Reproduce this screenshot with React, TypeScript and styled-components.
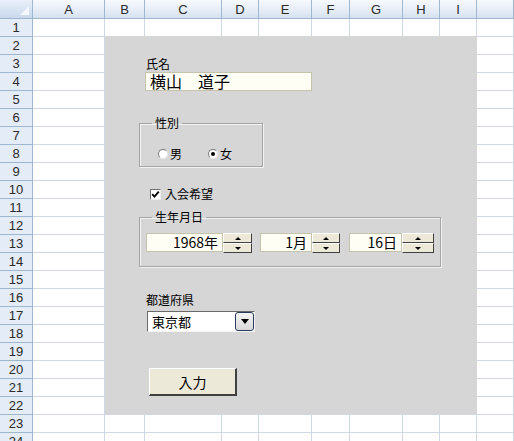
import { createGlobalStyle } from 'styled-components';
import styled from 'styled-components';

const GlobalStyle = createGlobalStyle`
  html, body {
    margin: 0;
    padding: 0;
    background: #ffffff;
    overflow: hidden;
  }
  body {
    font-family: "Liberation Sans", "Noto Sans CJK JP", sans-serif;
  }
`;

const columns = ['A', 'B', 'C', 'D', 'E', 'F', 'G', 'H', 'I', ''];
const widths = [72, 40, 77, 37, 53, 38, 53, 37, 37];
const rowCount = 24;

const Sheet = styled.div`
  position: relative;
  width: 514px;
  height: 441px;
  overflow: hidden;
`;

const Grid = styled.div`
  display: grid;
  grid-template-columns: 33px ${widths.map((w) => `${w}px`).join(' ')} 1fr;
  grid-template-rows: 19px;
  grid-auto-rows: 18px;
`;

const Corner = styled.div`
  position: relative;
  background: linear-gradient(to bottom, #e9f0f9, #c9d8ec);
  border-right: 1px solid #9eb6ce;
  border-bottom: 1px solid #9eb6ce;
  box-sizing: border-box;
  &::after {
    content: '';
    position: absolute;
    right: 3px;
    bottom: 3px;
    width: 0;
    height: 0;
    border-left: 9px solid transparent;
    border-bottom: 9px solid #f4f8fc;
  }
`;

const ColHead = styled.div`
  display: flex;
  align-items: center;
  justify-content: center;
  background: linear-gradient(to bottom, #f7f9fd 0%, #e6edf7 55%, #d6e1f0 100%);
  border-right: 1px solid #9eb6ce;
  border-bottom: 1px solid #9eb6ce;
  box-sizing: border-box;
  font-size: 13px;
  color: #2a2a2a;
`;

const RowHead = styled.div`
  display: flex;
  align-items: center;
  justify-content: center;
  background: #e4ecf7;
  border-right: 1px solid #9eb6ce;
  border-bottom: 1px solid #9eb6ce;
  box-sizing: border-box;
  font-size: 13px;
  color: #2a2a2a;
`;

const Cell = styled.div`
  border-right: 1px solid #d0d7e5;
  border-bottom: 1px solid #d0d7e5;
  box-sizing: border-box;
  background: #ffffff;
`;

const Form = styled.div`
  position: absolute;
  left: 105px;
  top: 36px;
  width: 372px;
  height: 378px;
  background: #d6d6d6;
  display: flex;
  flex-direction: column;
  align-items: flex-start;
  font-family: "Noto Sans CJK JP", "Liberation Sans", sans-serif;
  color: #000;
`;

const Placed = styled.div<{ $top: number; $left: number }>`
  margin-top: ${(p) => p.$top}px;
  margin-left: ${(p) => p.$left}px;
`;

const Label = styled.div`
  font-size: 12px;
  line-height: 12px;
`;

const TextBox = styled.div<{ $w: number; $size?: number; $right?: boolean }>`
  width: ${(p) => p.$w}px;
  height: 19px;
  box-sizing: border-box;
  background: #fffef4;
  border: 1px solid #c6c3ac;
  font-size: ${(p) => p.$size ?? 14}px;
  line-height: 17px;
  padding: 0 4px;
  display: flex;
  align-items: center;
  justify-content: ${(p) => (p.$right ? 'flex-end' : 'flex-start')};
  white-space: pre;
`;

const Frame = styled.fieldset<{ $w: number; $h: number }>`
  width: ${(p) => p.$w}px;
  height: ${(p) => p.$h}px;
  box-sizing: border-box;
  margin: 0;
  padding: 0 6px;
  border: 1px solid #a5a5a5;
  box-shadow: inset 1px 1px 0 #f2f2f2, 1px 1px 0 #f2f2f2;
  display: flex;
  align-items: flex-start;
  position: relative;
`;

const Legend = styled.legend`
  font-size: 12px;
  line-height: 14px;
  padding: 0 3px;
  margin-left: 6px;
`;

const RadioRow = styled.div`
  display: flex;
  align-items: center;
  gap: 26px;
  margin-left: 12px;
  margin-top: 17px;
`;

const Option = styled.div`
  display: flex;
  align-items: center;
  gap: 2px;
  font-size: 12px;
  line-height: 14px;
`;

const RadioDot = styled.span<{ $on?: boolean }>`
  width: 10px;
  height: 10px;
  border-radius: 50%;
  box-sizing: border-box;
  background: #fff;
  border: 1px solid #7a7a7a;
  border-right-color: #e8e8e8;
  border-bottom-color: #e8e8e8;
  display: flex;
  align-items: center;
  justify-content: center;
  &::after {
    content: '';
    width: 4px;
    height: 4px;
    border-radius: 50%;
    background: ${(p) => (p.$on ? '#000' : 'transparent')};
  }
`;

const CheckRow = styled.div`
  display: flex;
  align-items: center;
  gap: 4px;
  font-size: 12px;
  line-height: 14px;
`;

const CheckBox = styled.span`
  width: 11px;
  height: 11px;
  box-sizing: border-box;
  background: #fff;
  border: 1px solid #6f6f6f;
  border-right-color: #eeeeee;
  border-bottom-color: #eeeeee;
  display: flex;
  align-items: center;
  justify-content: center;
`;

const DateRow = styled.div`
  display: flex;
  align-items: center;
  margin-top: 9px;
`;

const DateField = styled.div<{ $gap: number }>`
  display: flex;
  align-items: flex-start;
  margin-left: ${(p) => p.$gap}px;
`;

const Spin = styled.div<{ $w: number }>`
  width: ${(p) => p.$w}px;
  height: 20px;
  display: flex;
  flex-direction: column;
`;

const SpinHalf = styled.div`
  flex: 1;
  box-sizing: border-box;
  background: #ece9d8;
  border-top: 1px solid #ffffff;
  border-left: 1px solid #ffffff;
  border-right: 1px solid #404040;
  border-bottom: 1px solid #404040;
  display: flex;
  align-items: center;
  justify-content: center;
`;

const Tri = styled.span<{ $up?: boolean }>`
  width: 0;
  height: 0;
  border-left: 3px solid transparent;
  border-right: 3px solid transparent;
  ${(p) => (p.$up ? 'border-bottom: 3px solid #000;' : 'border-top: 3px solid #000;')}
`;

const Combo = styled.div`
  width: 108px;
  height: 21px;
  box-sizing: border-box;
  background: #fff;
  border-top: 1px solid #6a6a6a;
  border-left: 1px solid #6a6a6a;
  border-right: 1px solid #f4f4f4;
  border-bottom: 1px solid #f4f4f4;
  display: flex;
  align-items: center;
  justify-content: space-between;
  padding-left: 4px;
  font-size: 13px;
`;

const DropBtn = styled.div`
  width: 19px;
  height: 19px;
  box-sizing: border-box;
  border: 1px solid #2b3d5c;
  border-radius: 3px;
  background: linear-gradient(to bottom, #f4f4f4, #d9d9d9);
  display: flex;
  align-items: center;
  justify-content: center;
`;

const DropTri = styled.span`
  width: 0;
  height: 0;
  border-left: 4px solid transparent;
  border-right: 4px solid transparent;
  border-top: 5px solid #000;
`;

const Button = styled.div`
  width: 88px;
  height: 28px;
  box-sizing: border-box;
  background: #ece9d8;
  border-top: 1px solid #ffffff;
  border-left: 1px solid #ffffff;
  border-right: 2px solid #404040;
  border-bottom: 2px solid #404040;
  display: flex;
  align-items: center;
  justify-content: center;
  font-size: 14px;
`;

function SpinButton({ w }: { w: number }) {
  return (
    <Spin $w={w}>
      <SpinHalf>
        <Tri $up />
      </SpinHalf>
      <SpinHalf>
        <Tri />
      </SpinHalf>
    </Spin>
  );
}

export default function App() {
  return (
    <>
      <GlobalStyle />
      <Sheet>
        <Grid>
          <Corner />
          {columns.map((c, i) => (
            <ColHead key={i}>{c}</ColHead>
          ))}
          {Array.from({ length: rowCount }, (_, r) => (
            <>
              <RowHead key={`h${r}`}>{r + 1}</RowHead>
              {columns.map((_, c) => (
                <Cell key={`c${r}-${c}`} />
              ))}
            </>
          ))}
        </Grid>
        <Form>
          <Placed $top={22} $left={41}>
            <Label>氏名</Label>
          </Placed>
          <Placed $top={2} $left={40}>
            <TextBox $w={167} $size={16}>横山　道子</TextBox>
          </Placed>
          <Placed $top={25} $left={34}>
            <Frame $w={124} $h={51}>
              <Legend>性別</Legend>
              <RadioRow>
                <Option>
                  <RadioDot />男
                </Option>
                <Option>
                  <RadioDot $on />女
                </Option>
              </RadioRow>
            </Frame>
          </Placed>
          <Placed $top={20} $left={45}>
            <CheckRow>
              <CheckBox>
                <svg width="9" height="9" viewBox="0 0 9 9">
                  <path d="M1.2 4.2 L3.4 6.6 L7.8 1.6" fill="none" stroke="#000" strokeWidth="1.8" />
                </svg>
              </CheckBox>
              入会希望
            </CheckRow>
          </Placed>
          <Placed $top={9} $left={34}>
            <Frame $w={299} $h={57}>
              <Legend>生年月日</Legend>
              <DateRow>
                <DateField $gap={0}>
                  <TextBox $w={77} $right>1968年</TextBox>
                  <SpinButton w={29} />
                </DateField>
                <DateField $gap={8}>
                  <TextBox $w={52} $right>1月</TextBox>
                  <SpinButton w={28} />
                </DateField>
                <DateField $gap={9}>
                  <TextBox $w={53} $right>16日</TextBox>
                  <SpinButton w={32} />
                </DateField>
              </DateRow>
            </Frame>
          </Placed>
          <Placed $top={27} $left={41}>
            <Label>都道府県</Label>
          </Placed>
          <Placed $top={5} $left={42}>
            <Combo>
              東京都
              <DropBtn>
                <DropTri />
              </DropBtn>
            </Combo>
          </Placed>
          <Placed $top={36} $left={44}>
            <Button>入力</Button>
          </Placed>
        </Form>
      </Sheet>
    </>
  );
}
